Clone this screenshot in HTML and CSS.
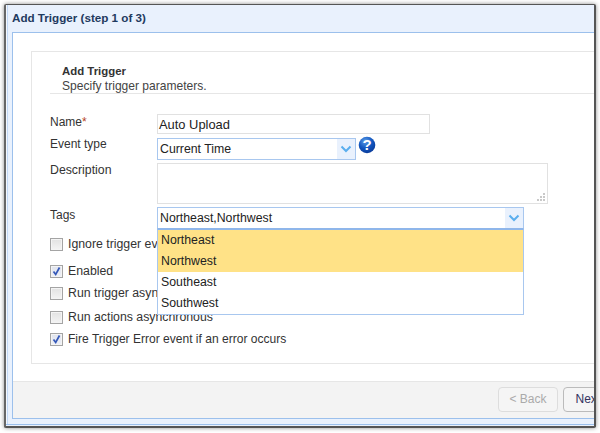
FILE: index.html
```html
<!DOCTYPE html>
<html lang="en">
<head>
<meta charset="utf-8">
<title>Add Trigger</title>
<link rel="stylesheet" href="styles.css">
</head>
<body>
<div class="window">
  <div class="titlebar">Add Trigger (step 1 of 3)</div>
  <div class="frame">
    <div class="content">
      <div class="panel">
        <div class="panel-head">
          <div class="head-title">Add Trigger</div>
          <div class="head-sub">Specify trigger parameters.</div>
        </div>
        <div class="row row-name">
          <div class="label">Name<span class="req">*</span></div>
          <div class="input input-name">Auto Upload</div>
        </div>
        <div class="row row-event">
          <div class="label">Event type</div>
          <div class="combo combo-event">
            <span class="combo-text">Current Time</span>
            <span class="combo-btn">
              <svg class="chev" viewBox="0 0 12 8"><path d="M1.500 1.500 6 6l4.500-4.500" fill="none" stroke="#5aaeee" stroke-width="2"/></svg>
            </span>
          </div>
          <svg class="help" viewBox="0 0 18 18">
            <defs><radialGradient id="hg" cx="40%" cy="28%" r="75%"><stop offset="0" stop-color="#5f9fe8"/><stop offset=".55" stop-color="#1257c0"/><stop offset="1" stop-color="#0a3a98"/></radialGradient></defs>
            <circle cx="9" cy="9" r="8.300" fill="url(#hg)"/>
            <text x="9" y="14" class="help-q" text-anchor="middle">?</text>
          </svg>
        </div>
        <div class="row row-desc">
          <div class="label">Description</div>
          <div class="textarea">
            <svg class="grip" viewBox="0 0 9 8"><path d="M7 0h2v2H7zM4 3h2v2H4zM7 3h2v2H7zM1 6h2v2H1zM4 6h2v2H4zM7 6h2v2H7z" fill="#c9c9c9"/></svg>
          </div>
        </div>
        <div class="row row-tags">
          <div class="label">Tags</div>
          <div class="combo combo-tags">
            <span class="combo-text">Northeast,Northwest</span>
            <span class="combo-btn">
              <svg class="chev" viewBox="0 0 12 8"><path d="M1.500 1.500 6 6l4.500-4.500" fill="none" stroke="#5aaeee" stroke-width="2"/></svg>
            </span>
            <div class="dropdown">
              <div class="opt sel">Northeast</div>
              <div class="opt sel">Northwest</div>
              <div class="opt">Southeast</div>
              <div class="opt">Southwest</div>
            </div>
          </div>
        </div>
        <div class="checks">
          <div class="check c1"><span class="box"></span>Ignore trigger events</div>
          <div class="check c2"><span class="box box-on"><svg viewBox="0 0 11 11"><path d="M2.500 5.500 4.700 8.500 8.500 1.500" fill="none" stroke="#3558b8" stroke-width="1.700"/></svg></span>Enabled</div>
          <div class="check c3"><span class="box"></span>Run trigger asynchronous</div>
          <div class="check c4"><span class="box"></span>Run actions asynchronous</div>
          <div class="check c5"><span class="box box-on"><svg viewBox="0 0 11 11"><path d="M2.500 5.500 4.700 8.500 8.500 1.500" fill="none" stroke="#3558b8" stroke-width="1.700"/></svg></span>Fire Trigger Error event if an error occurs</div>
        </div>
      </div>
    </div>
    <div class="footer">
      <div class="btn btn-back">&lt; Back</div>
      <div class="btn btn-next">Next &gt;</div>
    </div>
  </div>
</div>
</body>
</html>
```
FILE: styles.css
```css
* { box-sizing: border-box; }
html, body { margin: 0; padding: 0; }
body {
  width: 600px;
  height: 433px;
  overflow: hidden;
  background: #fff;
  font-family: "Liberation Sans", Arial, sans-serif;
  font-size: 12px;
  color: #222;
  padding: 4px 4px 5px 4px;
}
.window {
  height: 424px;
  border: 2px solid #555;
  border-top-width: 1px;
  border-left-color: #666;
  border-radius: 2px;
  background: #e9f1fd;
  box-shadow: 0 0 4px rgba(0,0,0,.45), inset 0 -1px 0 #e9f1fd, inset 0 -2px 0 #9cc0ec, inset 1px 0 0 #f4f8fe, inset 2px 0 0 #c3d8f5;
  padding: 0 0 6px 6px;
  display: flex;
  flex-direction: column;
  overflow: hidden;
}
.titlebar {
  height: 27px;
  flex: none;
  font-weight: bold;
  font-size: 11.650px;
  color: #1f3a5f;
  line-height: 26px;
  white-space: nowrap;
}
.frame {
  height: 387px;
  flex: none;
  border: 1px solid #9cc0ec;
  border-right: 0;
  background: #fff;
  display: flex;
  flex-direction: column;
}
.content {
  height: 349px;
  flex: none;
  padding: 18px 0 0 18px;
  border-bottom: 1px solid #e6e6e6;
  overflow: hidden;
}
.panel {
  height: 313px;
  border: 1px solid #e6e6e6;
  border-right: 0;
  padding: 0 0 0 18px;
  position: relative;
}
.panel-head {
  height: 42px;
  padding: 12px 0 0 12px;
  border-bottom: 1px solid #e6e6e6;
  line-height: 15px;
}
.head-title { font-weight: bold; font-size: 11.400px; color: #333; }
.head-sub { color: #444; font-size: 12.050px; }
.row { display: flex; align-items: flex-start; }
.label { width: 107px; flex: none; color: #333; line-height: 14px; }
.req { color: #b5451b; }
.input, .textarea {
  border: 1px solid #e1e1e1;
  background: #fff;
}
.row-name { margin-top: 20px; height: 20px; }
.row-name .label { padding-top: 1px; }
.input-name {
  width: 273px;
  height: 20px;
  padding: 0 0 0 1px;
  font-size: 12.900px;
  line-height: 19px;
  color: #222;
}
.row-event { margin-top: 4px; height: 25px; position: relative; }
.row-event .label { margin-top: -1px; }
.combo {
  border: 1px solid #a8c7ef;
  background: #fff;
  display: flex;
  align-items: stretch;
  position: relative;
}
.combo-event { width: 199px; height: 22px; }
.combo-text { flex: 1; padding-left: 2px; line-height: 20px; font-size: 12.300px; color: #222; white-space: nowrap; }
.combo-btn {
  width: 18px;
  flex: none;
  background: #e9f1fd;
  display: flex;
  align-items: center;
  justify-content: center;
}
.chev { width: 12px; height: 8px; display: block; }
.help { width: 18px; height: 18px; margin: -2px 0 0 2px; flex: none; }
.help-q { font: bold 15px "Liberation Sans", Arial, sans-serif; fill: #fff; }
.row-desc { height: 44px; }
.row-desc .label { font-size: 12.300px; }
.textarea {
  width: 391px;
  height: 41px;
  position: relative;
}
.grip { width: 9px; height: 8px; position: absolute; right: 2px; bottom: 2px; }
.row-tags { height: 22px; }
.row-tags .label { padding-top: 1px; }
.combo-tags { width: 367px; height: 22px; border-bottom-color: #8fb6ea; }
.dropdown {
  position: absolute;
  top: 21px;
  left: -1px;
  width: 367px;
  height: 86px;
  border: 1px solid #a8c7ef;
  border-top: 1px solid #8fb6ea;
  background: #fff;
  z-index: 2;
}
.opt { height: 21px; line-height: 21px; padding-left: 3px; font-size: 12.300px; color: #222; }
.sel { background: #ffe287; }
.check {
  display: flex;
  align-items: center;
  color: #333;
  height: 14px;
  font-size: 12.300px;
  white-space: nowrap;
}
.box {
  width: 13px;
  height: 13px;
  flex: none;
  margin-right: 5px;
  border: 1px solid #a4a4a4;
  background: linear-gradient(#e2e2e2, #f4f4f4);
  box-shadow: inset 0 0 0 1px #f4f4f4;
  display: block;
}
.box-on { background: linear-gradient(#dfe3ee, #eef0f6); }
.box svg { display: block; width: 11px; height: 11px; }
.c1 { margin-top: 8px; }
.c2 { margin-top: 13px; }
.c3 { margin-top: 8px; }
.c4 { margin-top: 10px; }
.c5 { margin-top: 8px; font-size: 12.050px; }
.footer {
  flex: 1;
  min-height: 0;
  background: #f3f3f3;
  display: flex;
  justify-content: flex-end;
  padding: 5px 0 0 0;
  gap: 5px;
  overflow: hidden;
}
.btn {
  height: 25px;
  border: 1px solid #ccc;
  border-radius: 4px;
  background: #f5f5f5;
  line-height: 23px;
  text-align: center;
  flex: none;
  white-space: nowrap;
}
.btn-back { width: 60px; color: #aaa; border-color: #ddd; }
.btn-next { width: 60px; color: #33335f; border-color: #bbb; margin-right: -29px; }
```
